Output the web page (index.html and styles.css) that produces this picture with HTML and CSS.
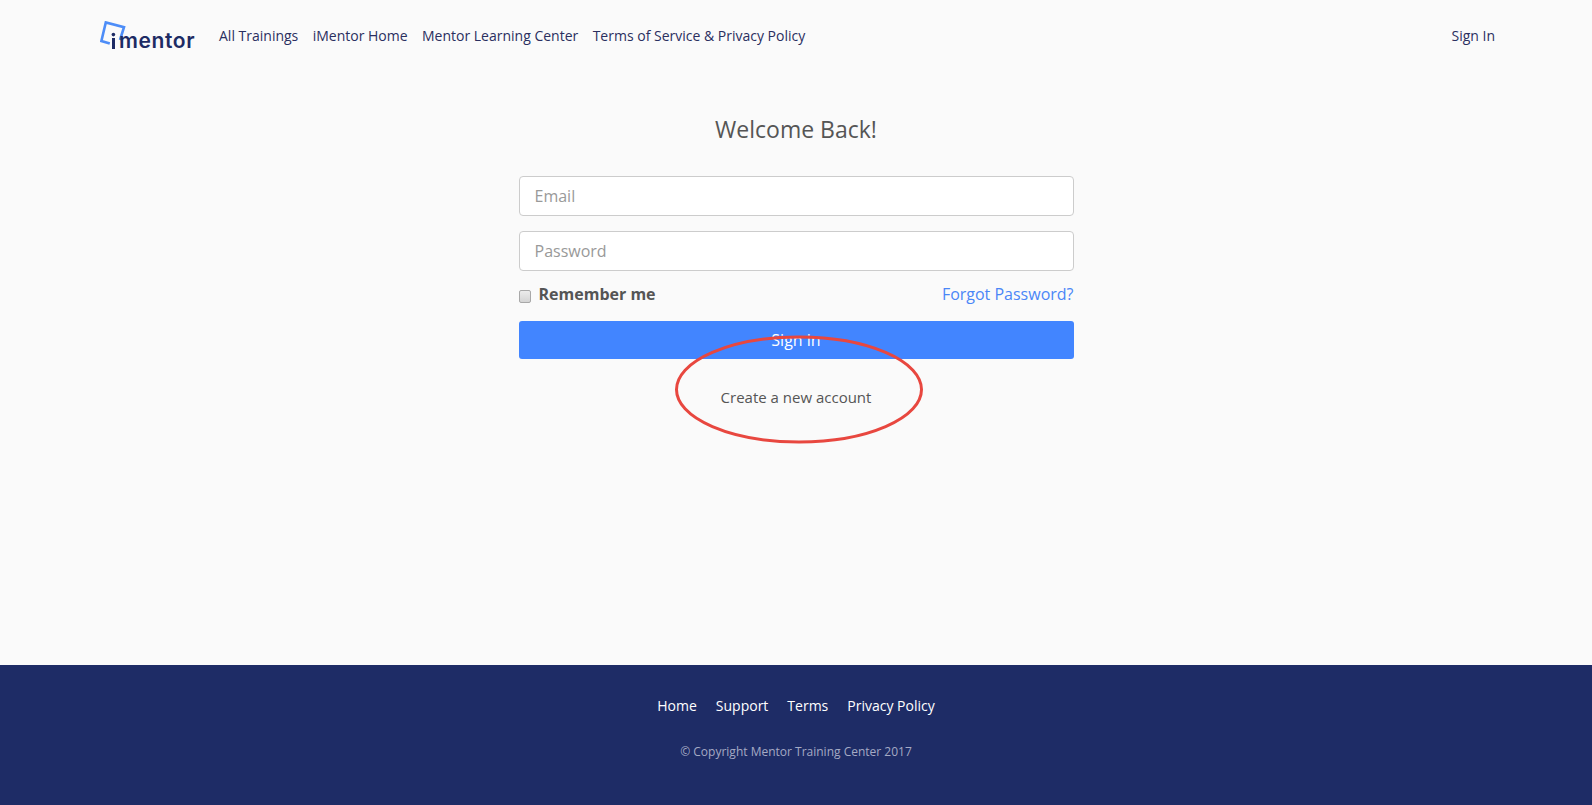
FILE: index.html
```html
<!DOCTYPE html>
<html lang="en">
<head>
<meta charset="utf-8">
<title>Sign In</title>
<link rel="stylesheet" href="styles.css">
</head>
<body>
<div class="page">
  <header class="topbar">
    <div class="nav-left">
      <a class="logo" href="#">
        <svg class="logo-mark" width="26" height="30" viewBox="0 0 26 30" aria-hidden="true">
          <path d="M9.8 22.6 L1.4 20 L5.8 1.4 L24 6.2 L20 19" fill="none" stroke="#4d8df8" stroke-width="2.6"/>
          <circle cx="13.4" cy="13.6" r="1.8" fill="#1d2b64"/>
          <rect x="12" y="17" width="3" height="11" fill="#1d2b64"/>
        </svg>
        <span class="logo-text">mentor</span>
      </a>
      <nav class="nav-links">
        <a href="#">All Trainings</a>
        <a href="#">iMentor Home</a>
        <a href="#">Mentor Learning Center</a>
        <a href="#">Terms of Service &amp; Privacy Policy</a>
      </nav>
    </div>
    <a class="nav-signin" href="#">Sign In</a>
  </header>
  <main class="main">
    <h1 class="title">Welcome Back!</h1>
    <form class="form">
      <input class="field" type="text" placeholder="Email">
      <input class="field" type="password" placeholder="Password">
      <div class="options">
        <label class="remember"><input class="check" type="checkbox"> Remember me</label>
        <a class="forgot" href="#">Forgot Password?</a>
      </div>
      <button class="submit" type="button">Sign in</button>
      <div class="create-wrap">
        <a class="create" href="#">Create a new account</a>
        <svg class="circle" width="250" height="110" viewBox="0 0 250 110" aria-hidden="true">
          <ellipse cx="125" cy="55.5" rx="122.5" ry="52.5" fill="none" stroke="#e8473f" stroke-width="3"/>
        </svg>
      </div>
    </form>
  </main>
  <footer class="footer">
    <nav class="footer-links">
      <a href="#">Home</a>
      <a href="#">Support</a>
      <a href="#">Terms</a>
      <a href="#">Privacy Policy</a>
    </nav>
    <p class="copy">© Copyright Mentor Training Center 2017</p>
  </footer>
</div>
</body>
</html>
```
FILE: styles.css
```css
* { box-sizing: border-box; }
html, body { margin: 0; height: 100%; }
body {
  background: #fafafa;
  font-family: "Open Sans", sans-serif;
  color: #555;
  overflow: hidden;
}
a { text-decoration: none; color: inherit; }
.page { height: 805px; display: flex; flex-direction: column; }
.topbar {
  height: 71px;
  padding: 0 97px 0 100px;
  display: flex;
  align-items: center;
  justify-content: space-between;
  color: #2a2f5f;
  font-size: 14px;
}
.nav-left { display: flex; align-items: center; gap: 24px; }
.logo { display: flex; align-items: flex-end; width: 95px; height: 30px; color: #1d2b64; }
.logo-mark { display: block; flex: none; }
.logo-text {
  font-family: "Inter", sans-serif;
  font-weight: 600;
  font-size: 21px;
  line-height: 24px;
  margin-left: -7px;
  margin-bottom: -2px;
  letter-spacing: 0.6px;
}
.nav-links { display: flex; gap: 14.4px; }
.main {
  flex: 1;
  display: flex;
  flex-direction: column;
  align-items: center;
}
.title {
  margin: 41px 0 0;
  font-size: 23px;
  line-height: 34px;
  font-weight: 400;
  color: #555;
}
.form { width: 555px; margin-top: 30px; display: flex; flex-direction: column; }
.field {
  height: 40px;
  width: 100%;
  padding: 0 15px;
  margin-bottom: 15px;
  border: 1px solid #ccc;
  border-radius: 4px;
  background: #fff;
  font: 16px "Open Sans", sans-serif;
  color: #555;
}
.field::placeholder { color: #999; opacity: 1; }
.options {
  display: flex;
  justify-content: space-between;
  align-items: center;
  height: 24px;
  font-size: 16px;
  margin-top: -4px;
}
.remember { display: flex; align-items: center; gap: 7px; font-weight: 700; }
.check {
  appearance: none;
  margin: 5px 0 0;
  width: 12px;
  height: 13px;
  border: 1px solid #a8a8a8;
  border-radius: 2px;
  background: linear-gradient(#ececec, #d4d4d4);
}
.remember .check { margin-right: 1px; }
.forgot { color: #4a86f7; }
.submit {
  margin-top: 15px;
  height: 38px;
  border: 0;
  border-radius: 3px;
  background: #4285ff;
  color: #fff;
  font: 16px "Open Sans", sans-serif;
  padding: 0;
}
.create-wrap { position: relative; text-align: center; margin-top: 28px; font-size: 15px; line-height: 20px; }
.circle { position: absolute; left: 155px; top: -53px; }
.footer {
  height: 140px;
  background: #1e2c66;
  display: flex;
  flex-direction: column;
  align-items: center;
  color: #fff;
}
.footer-links { display: flex; gap: 19px; font-size: 14px; line-height: 20px; margin-top: 31px; }
.copy { margin: 27px 0 0; font-size: 12px; line-height: 18px; color: #a5aac4; }
```
